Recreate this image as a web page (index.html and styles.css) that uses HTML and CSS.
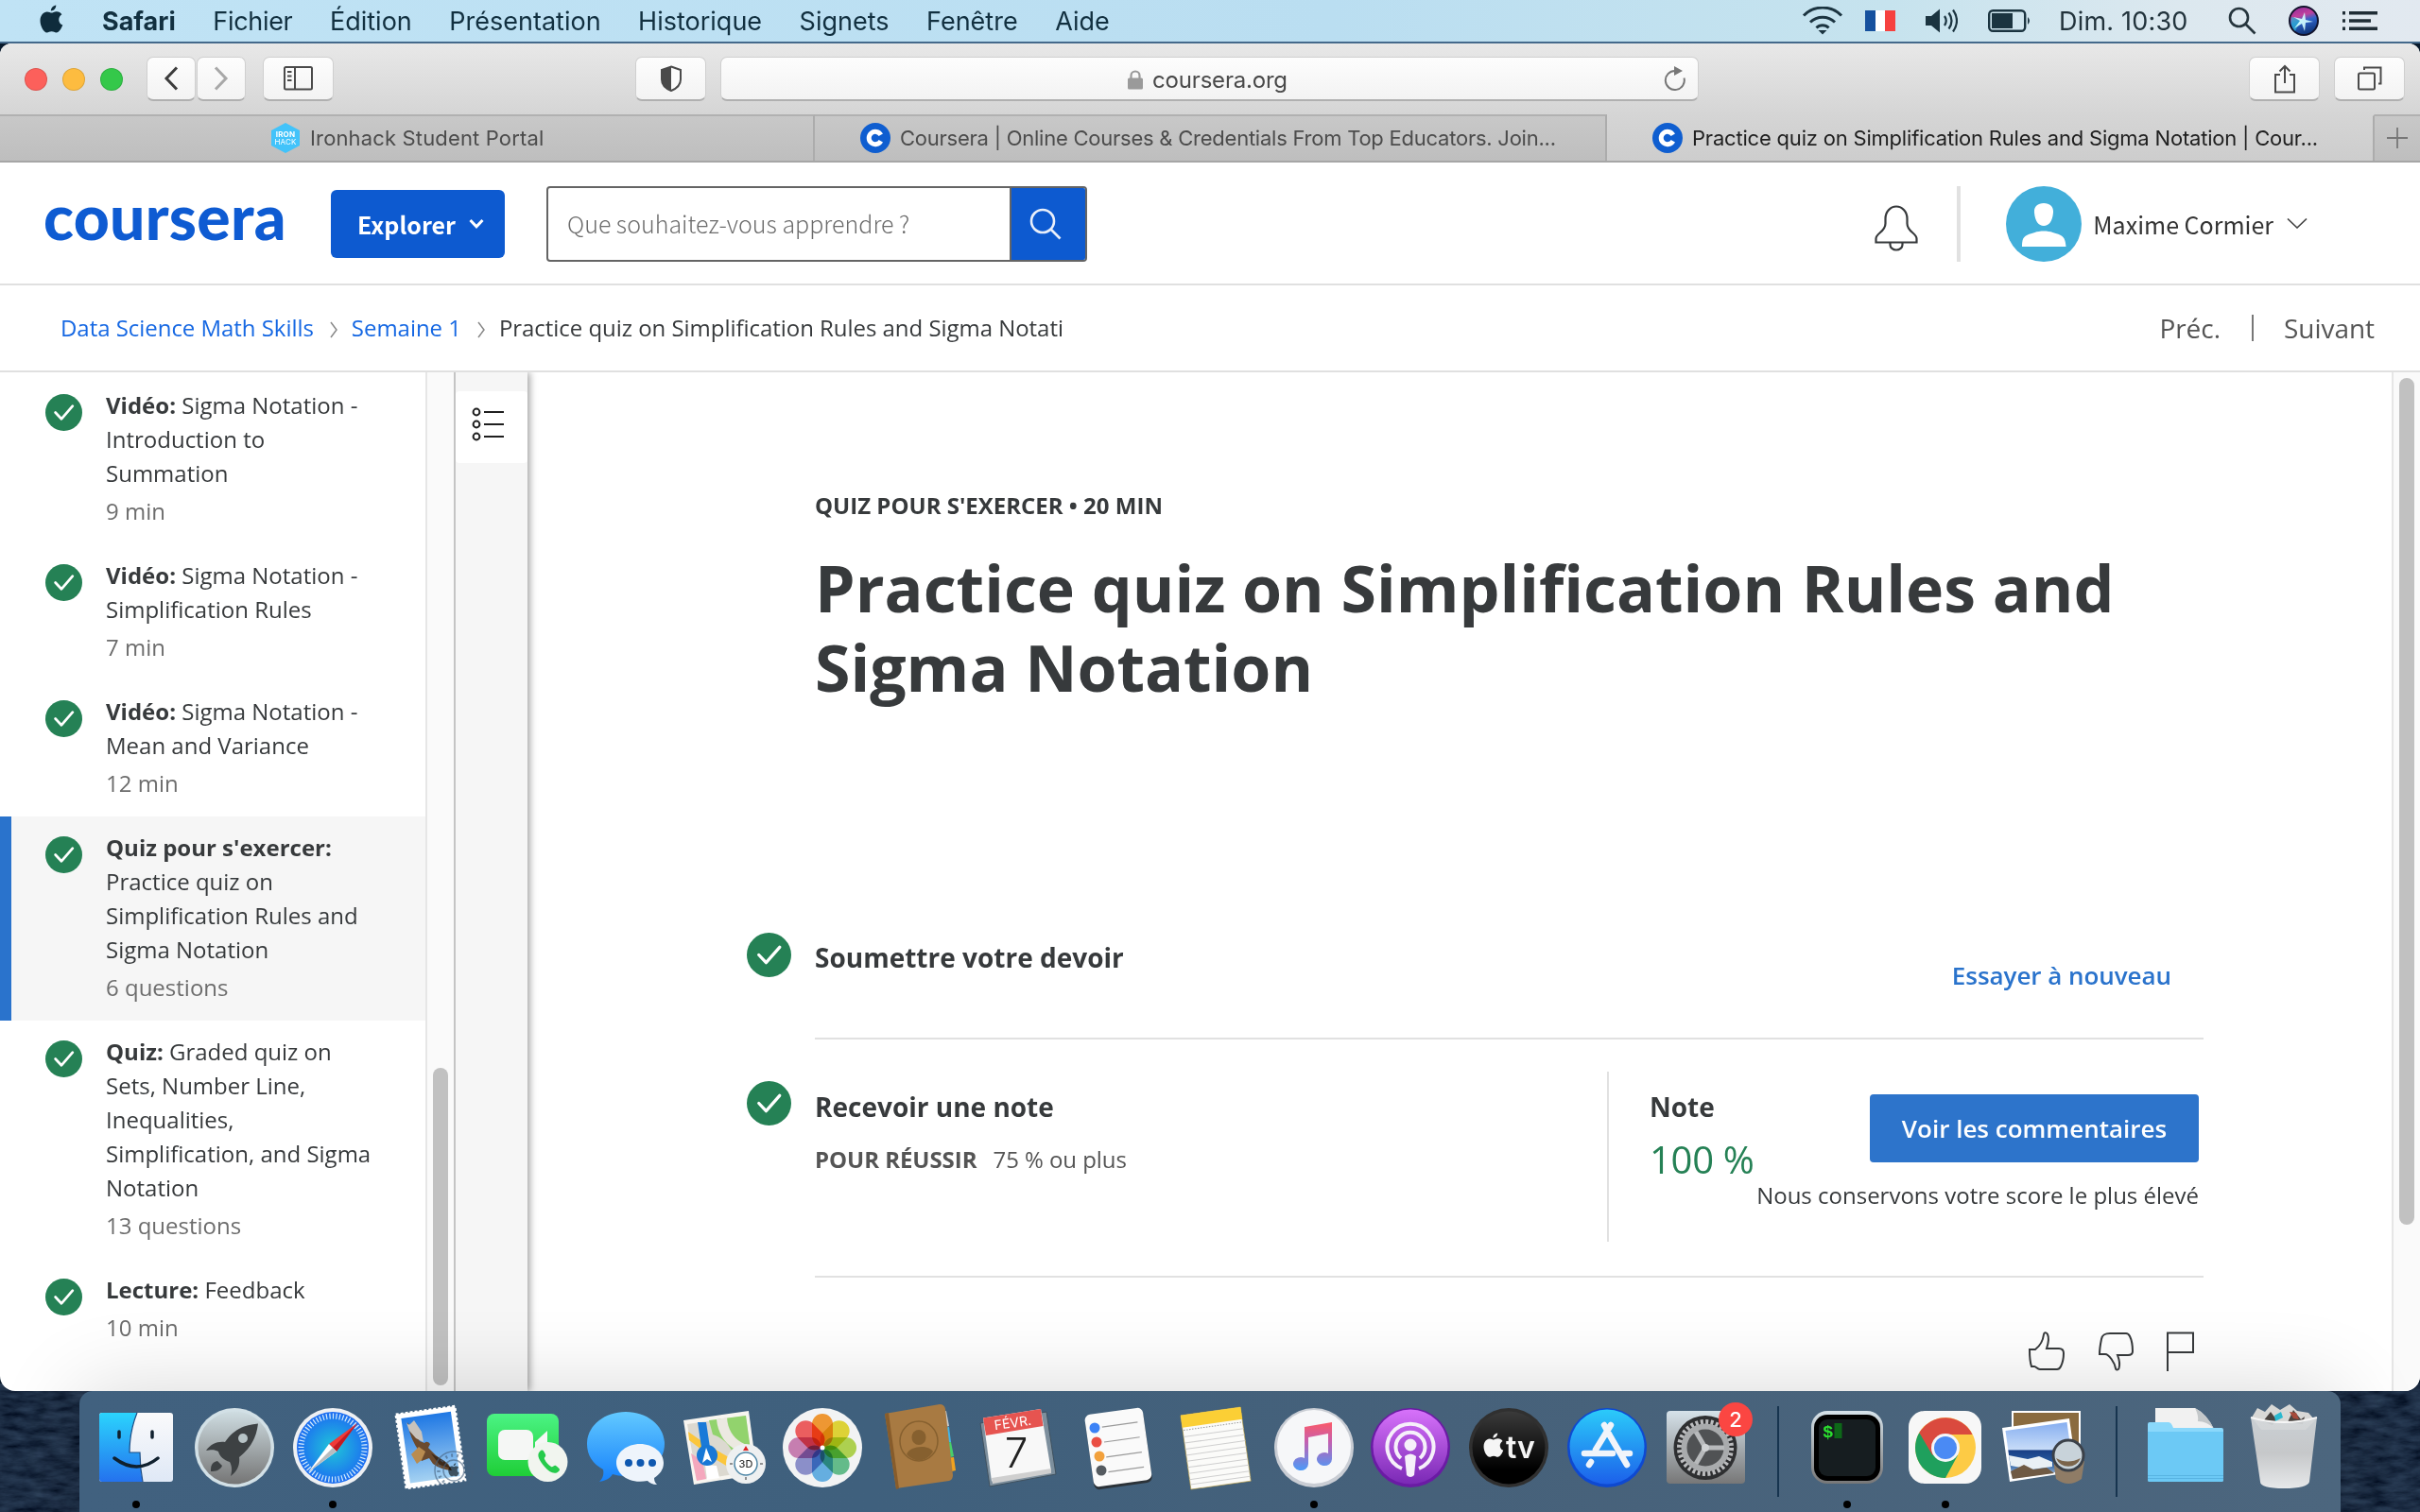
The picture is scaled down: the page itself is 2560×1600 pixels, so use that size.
FILE: index.html
```html
<!DOCTYPE html>
<html lang="fr">
<head>
<meta charset="utf-8">
<title>Practice quiz on Simplification Rules and Sigma Notation | Coursera</title>
<link rel="stylesheet" href="styles.css">
</head>
<body>
<svg width="0" height="0" class="defs">
  <defs>
    <symbol id="check" viewBox="0 0 46 46"><circle cx="23" cy="23" r="23" fill="#258155"/><path d="M12.500 23l7.500 8L34 15" fill="none" stroke="#fff" stroke-width="3.200" stroke-linecap="round" stroke-linejoin="round"/></symbol>
    <symbol id="apple" viewBox="0 0 25 31"><path d="M17.300 0.500c.2 3-2.400 6-5.400 6C11.600 3.600 14.400.800 17.300.500zM12.500 8.600c1.200 0 3-1.500 5.400-1.400 2.300.1 4.300 1.200 5.500 3-4.700 3-3.900 9.400.9 11.300-1.200 3.200-3.800 8-6.700 8-2 0-2.600-1.200-5-1.200s-3.100 1.200-5 1.200C4.300 29.500.5 22.500.5 16.800.5 11 4.200 7.400 7.800 7.400c2.100 0 3.600 1.200 4.700 1.200z"/></symbol>
    <symbol id="cicon" viewBox="0 0 32 32"><circle cx="16" cy="16" r="16" fill="#0f5ed0"/><path d="M21.800 12.800a6.700 6.700 0 1 0 0 6.400" fill="none" stroke="#fff" stroke-width="5"/></symbol>
    <linearGradient id="gFind" x2="0" y2="1"><stop stop-color="#2bd4fd"/><stop offset="1" stop-color="#2472ee"/></linearGradient>
    <linearGradient id="gWhite" x2="0" y2="1"><stop stop-color="#fafafb"/><stop offset="1" stop-color="#dfe8f6"/></linearGradient>
    <linearGradient id="gGrey" x2="0" y2="1"><stop stop-color="#cfdde2"/><stop offset="1" stop-color="#757575"/></linearGradient>
    <radialGradient id="gSaf"><stop stop-color="#20c6d8"/><stop offset="1" stop-color="#1c6cf2"/></radialGradient>
    <linearGradient id="gMail" x2="0" y2="1"><stop stop-color="#1f78e4"/><stop offset="1" stop-color="#a5d2f2"/></linearGradient>
    <linearGradient id="gGreen" x2="0" y2="1"><stop stop-color="#4bf384"/><stop offset="1" stop-color="#1fce37"/></linearGradient>
    <linearGradient id="gMsg" x2="0" y2="1"><stop stop-color="#62c9ff"/><stop offset="1" stop-color="#1681fb"/></linearGradient>
    <linearGradient id="gNote" x2="0" y2="1"><stop stop-color="#fb5a68"/><stop offset=".4" stop-color="#c55fb0"/><stop offset="1" stop-color="#4b9af8"/></linearGradient>
    <linearGradient id="gPod" x2="0" y2="1"><stop stop-color="#d772fa"/><stop offset="1" stop-color="#7a29b5"/></linearGradient>
    <linearGradient id="gTv" x2="0" y2="1"><stop stop-color="#3a3a3a"/><stop offset=".8" stop-color="#000"/></linearGradient>
    <linearGradient id="gStore" x2="0" y2="1"><stop stop-color="#2bcbfa"/><stop offset="1" stop-color="#1c60ea"/></linearGradient>
    <linearGradient id="gPref" x2="0" y2="1"><stop stop-color="#d6e2ea"/><stop offset="1" stop-color="#777"/></linearGradient>
    <linearGradient id="gSea" x2="0" y2="1"><stop stop-color="#86aef0"/><stop offset=".48" stop-color="#c7dcf8"/><stop offset=".5" stop-color="#193f85"/><stop offset=".75" stop-color="#2c62a6"/><stop offset="1" stop-color="#d7e2ea"/></linearGradient>
    <linearGradient id="gBin" x2="0" y2="1"><stop stop-color="#d3d7da"/><stop offset=".5" stop-color="#cfcfcf"/><stop offset="1" stop-color="#f2f2f2"/></linearGradient>
    <linearGradient id="gSiri" x2=".3" y2="1"><stop stop-color="#8f2a9e"/><stop offset=".4" stop-color="#c0409c"/><stop offset=".6" stop-color="#2f63c9"/><stop offset="1" stop-color="#123a80"/></linearGradient>
    <filter id="sea" x="0" y="0" width="100%" height="100%"><feTurbulence type="fractalNoise" baseFrequency=".04 .13" numOctaves="4" seed="4"/><feColorMatrix values=".3 0 0 0 -.11  .36 0 0 0 -.09  .4 0 0 0 -.03  0 0 0 0 1" color-interpolation-filters="sRGB"/></filter>
  </defs>
</svg>

<svg class="wallpaper" width="2560" height="136"><rect width="2560" height="136" filter="url(#sea)"/></svg>

<header class="menubar">
  <svg class="apple" width="25" height="31"><use href="#apple"/></svg>
  <nav class="menus"><b>Safari</b><span class="tight">Fichier</span><span>Édition</span><span>Présentation</span><span>Historique</span><span>Signets</span><span>Fenêtre</span><span>Aide</span></nav>
  <div class="status">
    <svg width="44" height="30" viewBox="0 0 44 30" fill="none" stroke="#1b3440" stroke-width="3"><path d="M2 9.500a28 28 0 0 1 40 0M9 16.500a18.500 18.500 0 0 1 26 0M15.500 22.500a9 9 0 0 1 13 0"/><path d="M22 29.500l-4.500-4.500h9z" fill="#1b3440" stroke="none"/></svg>
    <svg width="32" height="22"><rect width="11" height="22" fill="#16519e"/><rect x="11" width="10" height="22" fill="#fff"/><rect x="21" width="11" height="22" fill="#f6413f"/></svg>
    <svg width="34" height="26" viewBox="0 0 34 26"><path d="M0 8h6l9-7.500v25L6 18H0z" fill="#1b3440"/><path d="M20 8q3.500 5 0 10M24.500 4.500q6 8.500 0 17M29 1.500q8 11.500 0 23" fill="none" stroke="#1b3440" stroke-width="2.200"/></svg>
    <svg width="46" height="24" viewBox="0 0 46 24"><rect x="1.200" y="1.200" width="38" height="21.600" rx="4" fill="none" stroke="#1b3440" stroke-width="2.400"/><rect x="4" y="4" width="22" height="16" fill="#1b3440"/><path d="M42 8q4 4 0 8z" fill="#1b3440"/></svg>
    <span class="clock">Dim. 10:30</span>
    <svg width="30" height="30" viewBox="0 0 30 30" fill="none" stroke="#26353d" stroke-width="2.600"><circle cx="11.500" cy="11.500" r="9.500"/><path d="M18.500 18.500l10 10"/></svg>
    <svg width="32" height="32" viewBox="0 0 32 32"><circle cx="16" cy="16" r="15" fill="url(#gSiri)" stroke="#11132c" stroke-width="2"/><path d="M3 12c5 1 9 2 13 5-4 2-7 5-9 10C3 23 2 17 3 12z" fill="#2bb5d6" opacity=".7"/><path d="M17 7l1 8 8 2-8 1-1 9-3-8-8 5 6-8-7-4 9 2z" fill="#d6ffff" opacity=".9"/></svg>
    <svg width="37" height="20" viewBox="0 0 37 20" fill="#1f2d35"><path d="M0 0h3v3.500H0zM0 8.300h3v3.500H0zM0 16.500h3V20H0zM7 0h30v3.500H7zM7 8.300h23v3.500H7zM7 16.500h30V20H7z"/></svg>
  </div>
</header>

<div class="window">
  <div class="toolbar">
    <div class="lights"><i class="red"></i><i class="amber"></i><i class="green"></i></div>
    <div class="navs">
      <div class="tbtn half"><svg width="16" height="26" viewBox="0 0 16 26" fill="none" stroke="#3c3c3c" stroke-width="3"><path d="M14 1.500L3 13l11 11.500"/></svg></div>
      <div class="tbtn half"><svg width="16" height="26" viewBox="0 0 16 26" fill="none" stroke="#a8a8a8" stroke-width="3"><path d="M2 1.500L13 13 2 24.500"/></svg></div>
    </div>
    <div class="tbtn side"><svg width="32" height="26" viewBox="0 0 32 26" fill="none" stroke="#4a4a4a" stroke-width="2"><rect x="1" y="1" width="29" height="23.500" rx="1.500"/><path d="M12 1v24M4 6h4.500M4 10.500h4.500M4 15h4.500"/></svg></div>
    <div class="tbtn shield"><svg width="24" height="28" viewBox="0 0 24 28"><path d="M12 1.500l10 3.500v10c0 6-5 10-10 12-5-2-10-6-10-12V5z" fill="#fbfbfb" stroke="#4a4a4a" stroke-width="2"/><path d="M12 1.500v25.500C7 25 2 21 2 15V5z" fill="#4a4a4a"/></svg></div>
    <div class="address">
      <svg width="16" height="21" viewBox="0 0 16 21"><rect y="8.500" width="16" height="12" rx="1.500" fill="#9a9a9a"/><path d="M3.500 9V6a4.500 4.500 0 0 1 9 0v3" fill="none" stroke="#9a9a9a" stroke-width="2.200"/></svg>
      <span>coursera.org</span>
      <svg class="reload" width="24" height="26" viewBox="0 0 24 26"><path d="M21.500 12.500A10 10 0 1 1 12 5" fill="none" stroke="#777" stroke-width="2"/><path d="M11 0l9 5-9 5z" fill="#777"/></svg>
    </div>
    <div class="rbtns">
      <div class="tbtn"><svg width="24" height="31" viewBox="0 0 24 31" fill="none" stroke="#4a4a4a" stroke-width="2"><path d="M7 11H2v18.500h20V11h-5M12 20V2M6.500 7.500L12 2l5.500 5.500"/></svg></div>
      <div class="tbtn"><svg width="26" height="26" viewBox="0 0 26 26" fill="none" stroke="#4a4a4a" stroke-width="2"><rect x="1" y="7.500" width="17" height="17" rx="1.500"/><path d="M7 4V1.500h17.500v17H22"/></svg></div>
    </div>
  </div>
  <div class="tabs">
    <div class="tab t1"><svg width="30" height="32" viewBox="0 0 30 32"><path d="M15 0l15 8v16l-15 8-15-8V8z" fill="#42c3fa"/><text x="15" y="15" class="iron">IRON</text><text x="15" y="22.500" class="iron thin">HACK</text></svg><span>Ironhack Student Portal</span></div>
    <div class="tab t2"><svg width="32" height="32"><use href="#cicon"/></svg><span>Coursera | Online Courses &amp; Credentials From Top Educators. Join...</span></div>
    <div class="tab t3"><svg width="32" height="32"><use href="#cicon"/></svg><span>Practice quiz on Simplification Rules and Sigma Notation | Cour...</span></div>
    <div class="tab plus"><svg width="22" height="22" viewBox="0 0 22 22" stroke="#777" stroke-width="1.800"><path d="M11 0v22M0 11h22"/></svg></div>
  </div>

  <div class="site-header">
    <div class="logo">coursera</div>
    <div class="explore">Explorer<svg width="16" height="12" viewBox="0 0 16 12" fill="none" stroke="#fff" stroke-width="3"><path d="M1.500 2L8 8.800 14.500 2"/></svg></div>
    <div class="search"><div class="field">Que souhaitez-vous apprendre ?</div><div class="go"><svg width="34" height="34" viewBox="0 0 34 34" fill="none" stroke="#e9effa" stroke-width="2.600"><circle cx="14" cy="14" r="12"/><path d="M22.500 22.500l10 10"/></svg></div></div>
    <div class="account">
      <svg class="bell" width="46" height="50" viewBox="0 0 46 50" fill="none" stroke="#373a3c" stroke-width="2.200"><path d="M1.500 40.500v-4c0-6 10-7 10-16v-5a11.500 13 0 0 1 23 0v5c0 9 10 10 10 16v4zM16.500 41v2a6.500 5.500 0 0 0 13 0v-2"/></svg>
      <div class="avatar"><svg width="80" height="80" viewBox="0 0 80 80"><circle cx="40" cy="40" r="40" fill="#42afda"/><path d="M40 18c7 0 10.500 4 10 10-.8 9-4.500 14-10 14s-9.200-5-10-14c-.5-6 3-10 10-10zM17 64c0-10 2-12 13.500-15 5 -2 14-2 19 0C61 52 62.500 54 63.500 64z" fill="#fff"/></svg></div>
      <span>Maxime Cormier</span>
      <svg width="22" height="11" viewBox="0 0 22 11" fill="none" stroke="#444" stroke-width="1.600"><path d="M1 .5l10 9.500L21 .5"/></svg>
    </div>
  </div>

  <div class="crumbs">
    <a>Data Science Math Skills</a>
    <svg width="8" height="18" viewBox="0 0 8 18" fill="none" stroke="#888" stroke-width="1.500"><path d="M1 1l6 8-6 8"/></svg>
    <a>Semaine 1</a>
    <svg width="8" height="18" viewBox="0 0 8 18" fill="none" stroke="#888" stroke-width="1.500"><path d="M1 1l6 8-6 8"/></svg>
    <span>Practice quiz on Simplification Rules and Sigma Notati</span>
    <div class="pager"><span>Préc.</span><i></i><span>Suivant</span></div>
  </div>

  <div class="content">
    <aside class="lessons">
      <div class="lesson"><svg><use href="#check"/></svg><div><p><b>Vidéo:</b> Sigma Notation - Introduction to Summation</p><small>9 min</small></div></div>
      <div class="lesson"><svg><use href="#check"/></svg><div><p><b>Vidéo:</b> Sigma Notation - Simplification Rules</p><small>7 min</small></div></div>
      <div class="lesson"><svg><use href="#check"/></svg><div><p><b>Vidéo:</b> Sigma Notation - Mean and Variance</p><small>12 min</small></div></div>
      <div class="lesson active"><svg><use href="#check"/></svg><div><p><b>Quiz pour s'exercer:</b> Practice quiz on Simplification Rules and Sigma Notation</p><small>6 questions</small></div></div>
      <div class="lesson"><svg><use href="#check"/></svg><div><p><b>Quiz:</b> Graded quiz on Sets, Number Line, Inequalities, Simplification, and Sigma Notation</p><small>13 questions</small></div></div>
      <div class="lesson"><svg><use href="#check"/></svg><div><p><b>Lecture:</b> Feedback</p><small>10 min</small></div></div>
    </aside>
    <div class="track left"><i></i></div>
    <div class="rail"><div class="toggle"><svg width="36" height="36" viewBox="0 0 36 36" fill="none" stroke="#1f1f1f" stroke-width="2"><circle cx="5" cy="5" r="3.400"/><circle cx="5" cy="18" r="3.400"/><circle cx="5" cy="31" r="3.400"/><path d="M13 5h21M13 18h21M13 31h21"/></svg></div></div>
    <main class="quiz">
      <div class="eyebrow">QUIZ POUR S'EXERCER • 20 MIN</div>
      <h1>Practice quiz on Simplification Rules and Sigma Notation</h1>
      <section class="step submit">
        <svg class="mark"><use href="#check"/></svg>
        <div class="body"><h2>Soumettre votre devoir</h2><a>Essayer à nouveau</a></div>
      </section>
      <section class="step grade">
        <svg class="mark"><use href="#check"/></svg>
        <div class="body">
          <div class="pass"><h2>Recevoir une note</h2><p><b>POUR RÉUSSIR</b>75 % ou plus</p></div>
          <div class="result">
            <div class="score"><h2>Note</h2><p>100 %</p></div>
            <div class="review"><div class="button">Voir les commentaires</div><p>Nous conservons votre score le plus élevé</p></div>
          </div>
        </div>
      </section>
      <div class="feedback">
        <svg width="40" height="42" viewBox="0 0 40 42" fill="none" stroke="#373a3c" stroke-width="2"><path d="M2 19h6c4-3 8-8 9-16 .3-2.500 3-2 4 0 2 4 1 9-1 15h13c3 0 5 2 5 5 0 6-1 10-3 14-1 2-2 3-4 3H13c-3 0-4-3-6-3H4C2 31 2 25 2 19z"/></svg>
        <svg width="40" height="42" viewBox="0 0 40 42" fill="none" stroke="#373a3c" stroke-width="2"><path d="M2 24h6c4 0 10 9 11 15 .3 2.500 3 1.500 3.500 0 1.500-5 .5-9-1.500-14h11c3 0 5-1 5-4 0-7-1-12-3-16-1-2-2-3-4-3H13C8 2 5 3 4 8c-1 5-2 11-2 16z"/></svg>
        <svg width="32" height="42" viewBox="0 0 32 42" fill="none" stroke="#373a3c" stroke-width="2"><path d="M2 42V1.500h27V22H2"/></svg>
      </div>
    </main>
    <div class="track right"><i></i></div>
  </div>
</div>

<footer class="dock">
  <svg class="ic"><rect x="13" y="23" width="78" height="73" rx="3" fill="url(#gWhite)"/><path d="M16 23h37C47 38 45 50 45 65h11c0 12 1 21 3 31H16a3 3 0 0 1-3-3V26a3 3 0 0 1 3-3z" fill="url(#gFind)"/><path d="M53 23C47 38 45 50 45 65h11c0 12 1 21 3 31" fill="none" stroke="#1b4c84" stroke-width="1.200"/><path d="M34 43v6M69 43v6M29 71q24 18 46 0" fill="none" stroke="#10202e" stroke-width="3.500" stroke-linecap="round"/><circle cx="52" cy="120" r="4"/></svg>
  <svg class="ic"><circle cx="52" cy="60" r="42" fill="#d2e0e6"/><circle cx="52" cy="60" r="38.500" fill="url(#gGrey)"/><path d="M77 34.500C60 36 50 42 42 54c-8-1-15 2-20 9 6-1 9-1 13 1 1 5 6 9 12 11 2 4 3 8 1 15 7-5 10-12 9-20 10-8 18-18 20-35.500z" fill="#3d4143"/><path d="M34 74c-7 2-7 6-7 11 5 0 10-1 12-6z" fill="#3d4143"/><circle cx="61" cy="50" r="5" fill="#b7c3c6"/></svg>
  <svg class="ic"><circle cx="52" cy="60" r="42" fill="#eef0f3"/><circle cx="52" cy="60" r="38" fill="url(#gSaf)"/><circle cx="52" cy="60" r="33.500" fill="none" stroke="#d7ecfc" stroke-width="6" stroke-dasharray="1.200 2.300"/><path d="M78 34L48 56l8 8z" fill="#f03a38"/><path d="M78 34L52 60l4 4z" fill="#c21b22"/><path d="M26 86l22-30 8 8z" fill="#fff"/><path d="M26 86l26-26 4 4z" fill="#b9bdc0"/><circle cx="52" cy="120" r="4"/></svg>
  <svg class="ic"><g transform="rotate(-8 52 60)"><rect x="20" y="20" width="63" height="79" fill="#fff" stroke="#fff" stroke-width="2.500" stroke-dasharray="3 2"/><rect x="25" y="25" width="53" height="69" fill="url(#gMail)"/></g><path d="M27 33l13 20 5 2q3-3 6 1l-2 4 8 8 13 9 4 7q-12-1-20-7l-4-6-8 3-4-7 1-4q-9-12-12-30z" fill="#6b4a2e"/><path d="M25 31q2 6 5 4l4-4 8 12 2 11-8-4-7-8z" fill="#c9c3bb"/><path d="M31 67l8-8 7 5-4 9-5 4z" fill="#b98c50"/><path d="M52 66l14 8 7 8-12-4z" fill="#3d2a1b"/><g fill="none" stroke="#45607c" opacity=".6"><circle cx="76" cy="84" r="20" stroke-width="1.500"/><circle cx="76" cy="84" r="11" stroke-width="1.500"/><circle cx="76" cy="84" r="16" stroke-width="3.500" stroke-dasharray="2 4"/></g><svg x="70" y="76" width="12" height="15" opacity=".6"><use href="#apple"/></svg></svg>
  <svg class="ic"><rect x="7" y="24" width="76" height="66" rx="8" fill="url(#gGreen)"/><rect x="19" y="41" width="37" height="32" rx="7" fill="#f5f7f5"/><path d="M58 54l13-12v26l-13-6z" fill="#f5f7f5"/><circle cx="71.500" cy="75" r="21" fill="#f1f5ef"/><path d="M63 64c3-3 4-1 6 3 1 3-2 3-1 5 2 4 4 6 7 8 2 1 3-2 5-1 4 3 5 4 3 6-4 4-10 1-15-5s-9-12-5-16z" fill="#26cb4c"/></svg>
  <svg class="ic"><path d="M50 22c23 0 41 15 41 34S73 90 50 90c-6 0-10-1-14-2-3 5-8 7-14 8 4-4 5-8 4-13C15 77 9 68 9 56c0-19 18-34 41-34z" fill="url(#gMsg)"/><path d="M65 56c14 0 25 9 25 20 0 7-4 12-10 16 0 3 1 5 3 7-5 0-8-2-10-4-21 4-33-8-33-19s11-20 25-20z" fill="#eef4fb"/><g fill="#0f58b0"><circle cx="53" cy="76" r="4"/><circle cx="65.500" cy="76" r="4"/><circle cx="78" cy="76" r="4"/></g></svg>
  <svg class="ic"><path d="M7 31l69-10 9 67-67 11z" fill="#f7f5f0"/><path d="M11 35l62-9 8 59-60 9z" fill="#dcd9d0"/><path d="M34 31l39-5 8 59-16 2C62 60 50 50 38 46z" fill="#92d36d"/><path d="M42 30c2 22 18 36 38 37l-1-9C66 56 54 46 53 28z" fill="#ece9e1"/><path d="M12 43l20 14 32 18v11L34 68 13 52z" fill="#fbc63c"/><path d="M15 66l12 8 4 19-10 2z" fill="#f4a8bd"/><path d="M22 33h9l6 40h-9z" fill="#1a7ad8"/><path d="M30 78l12 1 3 13-13 2z" fill="#fff"/><circle cx="32" cy="68" r="11" fill="#1778d6"/><path d="M31 60l6 15-5-3-5 4z" fill="#fff"/><circle cx="73" cy="77" r="21" fill="#eef0f1"/><circle cx="73" cy="77" r="12" fill="#fff" stroke="#4f87a7" stroke-width="1.500"/><path d="M73 58l3 5h-6z" fill="#d22"/><path d="M56 77h3M88 77h3M73 91v3" stroke="#333"/><text x="73" y="81" text-anchor="middle" class="d3">3D</text></svg>
  <svg class="ic"><circle cx="50" cy="60" r="42" fill="#f2f3f4"/><g class="petals"><rect x="39" y="24" width="22" height="35" rx="11" fill="#fb9a2a"/><rect x="39" y="24" width="22" height="35" rx="11" fill="#e8dc2e" transform="rotate(45 50 60)"/><rect x="39" y="24" width="22" height="35" rx="11" fill="#b3d94a" transform="rotate(90 50 60)"/><rect x="39" y="24" width="22" height="35" rx="11" fill="#61c18a" transform="rotate(135 50 60)"/><rect x="39" y="24" width="22" height="35" rx="11" fill="#62b3ea" transform="rotate(180 50 60)"/><rect x="39" y="24" width="22" height="35" rx="11" fill="#8d90d0" transform="rotate(225 50 60)"/><rect x="39" y="24" width="22" height="35" rx="11" fill="#cf7db4" transform="rotate(270 50 60)"/><rect x="39" y="24" width="22" height="35" rx="11" fill="#f8595a" transform="rotate(315 50 60)"/></g><circle cx="50" cy="60" r="2.500" fill="#fff"/></svg>
  <svg class="ic"><path d="M70 22l7-1 3 16-7 2z" fill="#c9c9c9"/><path d="M73 39l7-1 2 16-7 1z" fill="#45b5e6"/><path d="M75 55l7-1 3 15-7 2z" fill="#48cf6a"/><path d="M77 71l8-1 2 14-8 2z" fill="#f1a21f"/><path d="M12 24l58-10q5 0 6 5l8 70q0 5-4 6l-56 8z" fill="#a87a42"/><path d="M12 24l4-1 11 80-3 1z" fill="#875c2b"/><ellipse cx="48" cy="53" rx="20" ry="21" fill="none" stroke="#86602f" stroke-width="1.500"/><ellipse cx="48" cy="49" rx="7.500" ry="8" fill="#86602f"/><path d="M35 67c3-9 23-11 28-3-7 12-20 12-28 3z" fill="#86602f"/></svg>
  <svg class="ic"><path d="M9 34l70-12 10 66-70 13z" fill="#7d8f9d" stroke="#3f515f"/><path d="M12 28.500L73 19l11 66-63 10.500z" fill="#f8f8f8"/><path d="M21 92l63-10v5L22 98z" fill="#cfcfcf"/><path d="M12 28.500L73 19l2.500 18L15 47z" fill="#e65450"/><text class="month" transform="rotate(-8 44 38)" x="44" y="38.500">FÉVR.</text><text class="day" x="47" y="81">7</text></svg>
  <svg class="ic"><g transform="rotate(-8 51 60)"><rect x="20" y="24" width="62" height="77" rx="6" fill="#2b3238"/><rect x="20" y="21" width="62" height="77" rx="6" fill="#fafafa"/><path d="M37 36h38M37 52h38M37 68h38M37 84h38" stroke="#9b9b9b" stroke-width="1.200"/></g><circle cx="26" cy="39" r="5.500" fill="#3b82f6"/><circle cx="28" cy="54" r="5.500" fill="#ea4f44"/><circle cx="31" cy="69" r="5.500" fill="#f2a13c"/><circle cx="33" cy="84" r="5.500" fill="#555b60"/></svg>
  <svg class="ic"><g transform="rotate(-8 50 60)"><rect x="18" y="21" width="64" height="79" fill="#fbfbf9" stroke="#b89a3a" stroke-width=".6"/><rect x="18" y="21" width="64" height="13" fill="#fbcf35"/><path d="M19 37h62" stroke="#999" stroke-dasharray="1.500 1.500"/><path d="M18 44h64M18 50.500h64M18 57h64M18 63.500h64M18 70h64M18 76.500h64M18 83h64M18 89.500h64M18 95h64" stroke="#cfcfcf"/></g></svg>
  <svg class="ic"><circle cx="50" cy="60" r="42" fill="#c9cdd4"/><circle cx="50" cy="59" r="39" fill="#f6f7f9"/><path d="M40 38l29-5v39a8 7 0 1 1-4-6V45l-21 4v28a8 7 0 1 1-4-6z" fill="url(#gNote)"/><circle cx="50" cy="120" r="4"/></svg>
  <svg class="ic"><circle cx="48" cy="60" r="42" fill="#6a1ba4"/><circle cx="48" cy="59" r="39.500" fill="url(#gPod)"/><g fill="none" stroke="#f6f0fa" stroke-width="4"><path d="M39 82a24.500 24.500 0 1 1 18 0"/><path d="M38 71a15.500 15.500 0 1 1 20 0"/></g><circle cx="48" cy="57" r="6.500" fill="#f6f0fa"/><path d="M42 69q6-5 12 0l-2 20q-4 4-8 0z" fill="#f6f0fa"/></svg>
  <svg class="ic"><circle cx="48" cy="60" r="42" fill="#303030"/><circle cx="48" cy="60" r="38.500" fill="url(#gTv)"/><svg x="21" y="44" width="22" height="27" fill="#f5f5f5"><use href="#apple"/></svg><text x="45" y="70.500" class="tv">tv</text></svg>
  <svg class="ic"><circle cx="48" cy="60" r="42" fill="#0e49d0"/><circle cx="48" cy="59" r="39.500" fill="url(#gStore)"/><g stroke="#f0f4fa" stroke-width="6.500" stroke-linecap="round" fill="none"><path d="M45 36l7 13 17 29M52 36L36 62M24 66h30M66 66h6M31 75l-2 3"/></g></svg>
  <svg class="ic"><rect x="7" y="21" width="83" height="77" rx="4" fill="url(#gPref)"/><ellipse cx="48" cy="60" rx="33.500" ry="34" fill="#2e2f31"/><circle cx="48" cy="60" r="27.500" fill="none" stroke="#bcbdbf" stroke-width="5" stroke-dasharray="3 2.400"/><circle cx="48" cy="60" r="22.500" fill="#505254" stroke="#a9abad" stroke-width="6"/><path d="M48 60h20M48 60L38 43M48 60L38 77" stroke="#b7b9bb" stroke-width="5"/><circle cx="48" cy="60" r="4" fill="#d0d2d4"/><circle cx="80" cy="30" r="18" fill="#fb4642"/><text x="80" y="37.500" class="badge">2</text></svg>
  <i class="sep s1"></i>
  <svg class="ic"><rect x="14" y="21" width="76" height="77" rx="17" fill="url(#gPref)"/><rect x="17" y="25" width="70" height="70" rx="14" fill="#000"/><rect x="22" y="30" width="60" height="60" rx="9" fill="#161d20"/><text x="26" y="49" class="term">$</text><rect x="38.500" y="34" width="8" height="16" fill="#0d6818"/><circle cx="52" cy="120" r="4"/></svg>
  <svg class="ic"><rect x="13" y="21" width="77" height="77" rx="17" fill="#f7f7f7"/><circle cx="52" cy="60" r="32" fill="#fdcb45"/><path d="M52 60h-14L24.300 44A32 32 0 0 0 52 92l13-24z" fill="#1fa05d"/><path d="M52 46h28.500A32 32 0 0 0 24.300 44l14 24z" fill="#da4a3e"/><circle cx="52" cy="60" r="15" fill="#f4f6f8"/><circle cx="52" cy="60" r="12" fill="#4a8af4"/><circle cx="52" cy="120" r="4"/></svg>
  <svg class="ic"><rect x="19" y="22" width="71" height="60" fill="#8a6b3f" stroke="#fff" stroke-width="2"/><path d="M8 39l71-10 8 56-71 11z" fill="#fff"/><path d="M11.500 42l65-9 7 50-65 10z" fill="url(#gSea)"/><path d="M15 68l20 4 12-3 14 6v5l-22 3-22-4z" fill="#e9f0f5"/><path d="M17 85l14-7 10 5 14-2 8 6-44 6z" fill="#6f5a44"/><path d="M62 74h33l-3 19q-14 10-27 0z" fill="#8f7c66"/><circle cx="78" cy="68" r="17.500" fill="#3b4149"/><circle cx="78" cy="68" r="14.500" fill="#c8d3da"/><path d="M65 71q12 7 26 0a14 14 0 0 1-26 0z" fill="#7a644b"/></svg>
  <i class="sep s2"></i>
  <svg class="ic"><path d="M20 18h42q12 6 20 22v10H20z" fill="#f1f1f1"/><path d="M62 18q4 8 3 14 10 0 17 8-8-16-20-22z" fill="#c4c8ca"/><path d="M12 35q0-2 2-2h20q3 0 5 6h51q2 0 2 2v53q0 2-2 2H14q-2 0-2-2z" fill="#8ad8fb"/><path d="M12 43h80v51q0 2-2 2H14q-2 0-2-2z" fill="#6cc9f5"/><path d="M12 89.500h80M12 92.500h80" stroke="#58b4e2"/></svg>
  <svg class="ic"><path d="M18 28l6-10 8 4 7-8 9 6 10-6 8 7 12 2 7 8-10 10H28z" fill="#d8d8d6"/><path d="M30 32l8-10 6 8-4 6zM56 33l6-13 8 10 4-3-2 8z" fill="#4a4440"/><path d="M42 26l7-4 2 6-8 4z" fill="#2bb9cf"/><path d="M58 22l7 1 3 7-6-1z" fill="#a54a3a"/><path d="M17 28q35 10 70 0l-8 68q-2 7-27 7t-25-7z" fill="url(#gBin)" opacity=".93"/><path d="M17 28q35 10 70 0" fill="none" stroke="#f6f6f6" stroke-width="2"/></svg>
</footer>
</body>
</html>
```
FILE: styles.css
```css
*{box-sizing:border-box}
body{margin:0;width:2560px;height:1600px;overflow:hidden;position:relative;background:#08192b;font-family:"Open Sans","Noto Sans",sans-serif;color:#373a3c}
h1,h2,p{margin:0}
svg{display:block;flex:none}
.defs{position:absolute}
.wallpaper{position:absolute;left:0;top:1464px}

/* menu bar */
.menubar{height:46px;display:flex;align-items:center;padding:0 45px 0 42px;background:linear-gradient(90deg,#c0e3f5 0,#badef1 55%,#c6e3ee 78%,#dce8ef 90%,#e2e9f0 100%);border-bottom:2px solid #44698b;font-family:Inter,sans-serif;font-size:27px;color:#123040;position:relative}
.apple{fill:#0f2c3c;margin-top:-4px}
.menus{display:flex;gap:39.5px;margin-left:41px}
.menus .tight{letter-spacing:-.3px}
.status{margin-left:auto;display:flex;align-items:center;position:relative}
.status svg:nth-of-type(2){margin-left:23px}
.status svg:nth-of-type(3){margin-left:32px}
.status svg:nth-of-type(4){margin-left:32px}
.clock{margin-left:29px;width:139px;white-space:nowrap;color:#22333c;letter-spacing:.2px}
.status svg:nth-of-type(5){margin-left:40px}
.status svg:nth-of-type(6){margin-left:34px}
.status svg:nth-of-type(7){margin-left:25px}

/* browser window */
.window{position:relative;height:1426px;border-radius:12px 12px 16px 16px;overflow:hidden;background:#fff;display:flex;flex-direction:column}
.toolbar{height:75px;flex:none;display:flex;align-items:center;padding:0 16px 0 26px;background:linear-gradient(#e8e8e8,#d5d5d5)}
.lights{display:flex;gap:16px}
.lights i{width:24px;height:24px;border-radius:50%;border:1px solid rgba(0,0,0,.12)}
.red{background:#fc605b}.amber{background:#fdbc40}.green{background:#34c84a}
.tbtn{height:47px;width:75px;border-radius:7px;background:linear-gradient(#fdfdfd,#f3f3f3);border:1px solid #cfcfcf;border-bottom:2px solid #b0b0b0;display:flex;align-items:center;justify-content:center}
.navs{display:flex;gap:1px;margin-left:25px}
.half{width:52px}
.side{margin-left:18px}
.shield{margin-left:319px}
.address{position:relative;margin-left:15px;width:1035px;height:47px;border-radius:7px;background:linear-gradient(#fdfdfd,#f3f3f3);border:1px solid #cfcfcf;border-bottom:2px solid #b0b0b0;display:flex;align-items:center;justify-content:center;gap:10px;font:24px Inter,sans-serif;letter-spacing:-.2px;color:#4a4a4a;padding:2px 4px 0 0}
.reload{position:absolute;right:12px;top:9px}
.rbtns{display:flex;gap:15px;margin-left:auto}
.tabs{height:51px;flex:none;display:flex;border-bottom:2px solid #a6a6a6;font:22px Inter,sans-serif;background:linear-gradient(#d5d5d5,#cdcdcd)}
.tab{display:flex;align-items:center;gap:10px;white-space:nowrap;color:#4c4c4c;background:linear-gradient(#c8c8c8,#bebebe);border-top:2px solid #b1b1b1;border-right:2px solid #acacac;padding-bottom:1px}
.t1{width:862px;padding-left:287px;gap:11px;letter-spacing:.15px}
.t2{width:838px;padding-left:48px;letter-spacing:-.24px}
.t3{width:812px;padding-left:48px;background:none;border-top-color:transparent;color:#1f1f1f;letter-spacing:-.2px}
.plus{flex:1;justify-content:center;border-right:0}
.iron{font:700 8px Inter,sans-serif;fill:#fff;text-anchor:middle}
.thin{font-weight:400}

/* site header */
.site-header{height:130px;flex:none;display:flex;align-items:center;padding:1px 0 0 46px;border-bottom:2px solid #e0e0e0}
.logo{width:257px;font:900 66px/70px Lato,sans-serif;color:#0e5bd2;margin-top:-15px;letter-spacing:.3px}
.explore{margin-left:47px;width:184px;height:72px;border-radius:6px;background:#0d5ad0;color:#fff;display:flex;align-items:center;padding-left:28px;gap:14px;font:700 25px "Noto Sans CJK SC",sans-serif}
.search{margin-left:44px;width:572px;height:80px;border:2px solid #646464;border-radius:4px;display:flex;font:300 25px "Noto Sans CJK SC",sans-serif;color:#6c6c6c;overflow:hidden}
.field{flex:1;display:flex;align-items:center;padding:0 0 1px 20px}
.go{width:80px;background:#0d5ad0;border-left:2px solid #646464;display:flex;align-items:center;justify-content:center;padding-right:6px}
.account{margin-left:auto;display:flex;align-items:center;padding-right:119px;font:400 25px "Noto Sans CJK SC",sans-serif;color:#333}
.bell{margin:8px 41px 0 0}
.avatar{border-left:4px solid #e1e1e1;padding-left:48px;margin-right:12px}
.account span{margin-right:14px}

/* breadcrumb */
.crumbs{height:92px;flex:none;display:flex;align-items:center;padding:0 48px 2px 64px;border-bottom:2px solid #e0e0e0;font-size:24px;letter-spacing:-.04px;white-space:nowrap}
.crumbs a{color:#1668e3}
.crumbs svg{margin:6px 15px 0 17px}
.pager{margin:2px 0 0 auto;display:flex;align-items:center;font-size:28px;color:#555}
.pager i{width:2px;height:28px;background:#777;margin:0 32px 0 33px}

/* content */
.content{flex:1;display:flex;min-height:0}
.lessons{width:450px;flex:none;padding-top:2px}
.lesson{display:flex;padding:15px 54px 17px 48px;font-size:24px;line-height:36px}
.lesson svg{width:39px;height:39px;margin:6px 25px 0 0}
.lesson>div{flex:1}
.lesson small{display:block;margin-top:4px;font-size:24px;color:#6d6d6d}
.active{background:#f6f6f6;border-left:12px solid #2a73cc;padding-left:36px}
.track{flex:none;background:#fafafa;border-left:2px solid #e6e6e6;display:flex}
.track i{width:16px;border-radius:8px;background:#c1c1c1}
.left{width:32px;border-right:2px solid #c4c4c4;padding:736px 0 6px 6px}
.rail{width:76px;flex:none;background:#f6f6f6;padding-top:20px;box-shadow:2px 0 8px rgba(0,0,0,.4);clip-path:inset(0 -14px 0 0)}
.toggle{height:76px;background:#fff;border-radius:4px;padding:17px 0 0 17px}
.quiz{flex:1;padding:123px 199px 0 304px;display:flex;flex-direction:column}
.right{width:30px;padding:6px 0 176px 6px}
.eyebrow{font-weight:700;font-size:24px;line-height:36px}
h1{font-weight:700;font-size:68px;line-height:84px;margin-top:27px;width:1469px}
h2{font-weight:700;font-size:28px;line-height:40px}
.step{display:flex;margin-left:-72px}
.mark{width:47px;height:47px;margin-right:25px}
.body{flex:1;border-bottom:2px solid #e1e1e1;display:flex}
.submit{margin-top:239px;height:113px}
.submit .body{justify-content:space-between;padding:6px 34px 0 0}
.submit a{font-weight:600;font-size:26px;line-height:40px;color:#2a73cc;margin-top:19px;letter-spacing:-.05px}
.grade .mark{margin-top:44px}
.grade .body{height:252px;padding:34px 0 36px}
.pass{width:838px;padding-top:17px}
.pass p{margin-top:18px;font-size:24px;line-height:36px;color:#555;letter-spacing:-.05px}
.pass b{margin-right:17px}
.result{flex:1;border-left:2px solid #e1e1e1;padding:17px 5px 0 43px;display:flex;white-space:nowrap}
.score{width:100px;flex:none}
.score p{margin-top:10px;font-size:40px;line-height:52px;color:#258155;letter-spacing:-.3px}
.review{flex:1;display:flex;flex-direction:column;align-items:flex-end;margin-top:7px}
.button{width:348px;height:72px;border-radius:4px;background:#2d74cb;color:#fff;font-weight:600;font-size:26px;line-height:72px;text-align:center}
.review p{margin-top:17px;font-size:24px;line-height:36px}
.feedback{display:flex;justify-content:flex-end;gap:34px;margin-top:57px;padding-right:8px}
.feedback svg:last-child{margin-left:-2px}

/* dock */
.dock{position:absolute;left:84px;top:1472px;width:2392px;height:128px;border-radius:14px 14px 0 0;background:linear-gradient(90deg,#41617f 0,#3f607d 35%,#46617a 60%,#4c667e 100%);box-shadow:0 0 90px rgba(0,0,0,.16);display:flex;padding-left:8px}
.ic{width:104px;height:128px}
.sep{width:2px;height:96px;background:#17344f;flex:none}
.s1{margin:16px 20px 0}
.s2{margin:16px 20px 0 24px}
.petals{mix-blend-mode:multiply}
.petals rect{mix-blend-mode:multiply;opacity:.95}
.d3{font:500 11px Inter,sans-serif;fill:#333}
.month{font:400 14px Inter,sans-serif;fill:#fff;text-anchor:middle}
.day{font:300 44px Inter,sans-serif;fill:#222;text-anchor:middle}
.tv{font:600 32px Inter,sans-serif;fill:#f5f5f5}
.badge{font:500 22px Inter,sans-serif;fill:#fff;text-anchor:middle}
.term{font:700 19px "Liberation Mono",monospace;fill:#2be02f}
```
